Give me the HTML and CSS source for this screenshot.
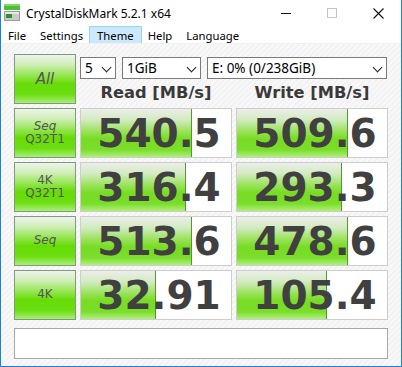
FILE: index.html
```html
<!DOCTYPE html>
<html lang="en">
<head>
  <meta charset="UTF-8">
  <title>CrystalDiskMark 5.2.1 x64</title>
  <link rel="stylesheet" href="styles.css">
</head>
<body>
  <div class="window">
    <div class="titlebar">
      <svg class="app-icon" width="16" height="17" viewBox="0 0 16 17">
        <rect x="0" y="0" width="16" height="6" fill="#4cbf3a"/>
        <rect x="0" y="0" width="16" height="2" fill="#7fdc62"/>
        <rect x="0.5" y="7.5" width="15" height="9" fill="#c9cbc9" stroke="#9a9c9a"/>
        <rect x="1" y="8" width="14" height="2" fill="#e6e7e6"/>
        <rect x="2" y="10" width="6" height="4" fill="#2f8f2a"/>
      </svg>
      <span class="title">CrystalDiskMark 5.2.1 x64</span>
      <div class="controls">
        <span class="ctl">
          <svg width="10" height="10" viewBox="0 0 10 10"><path d="M0 5.5H10" stroke="#111" stroke-width="1"/></svg>
        </span>
        <span class="ctl">
          <svg width="10" height="10" viewBox="0 0 10 10"><rect x="0.5" y="0.5" width="9" height="9" fill="none" stroke="#c4c4c4"/></svg>
        </span>
        <span class="ctl">
          <svg width="11" height="11" viewBox="0 0 11 11"><path d="M0.5 0.5L10.5 10.5M10.5 0.5L0.5 10.5" stroke="#111" stroke-width="1.1"/></svg>
        </span>
      </div>
    </div>

    <div class="menubar">
      <span class="menu-item">File</span>
      <span class="menu-item">Settings</span>
      <span class="menu-item active">Theme</span>
      <span class="menu-item">Help</span>
      <span class="menu-item">Language</span>
    </div>

    <div class="content">
      <div class="grid">
        <div class="label-btn all"><span class="slant">All</span></div>
        <div class="top-cell">
          <div class="selects">
            <div class="select count">5<span class="chev"></span></div>
            <div class="select size">1GiB<span class="chev"></span></div>
            <div class="select drive">E: 0% (0/238GiB)<span class="chev"></span></div>
          </div>
          <div class="headers">
            <div class="head">Read [MB/s]</div>
            <div class="head">Write [MB/s]</div>
          </div>
        </div>

        <div class="label-btn"><span class="slant">Seq</span><span>Q32T1</span></div>
        <div class="value"><div class="bar" style="width: 73%"></div><span class="num">540.5</span></div>
        <div class="value"><div class="bar" style="width: 73%"></div><span class="num">509.6</span></div>

        <div class="label-btn"><span>4K</span><span>Q32T1</span></div>
        <div class="value"><div class="bar" style="width: 69%"></div><span class="num">316.4</span></div>
        <div class="value"><div class="bar" style="width: 69%"></div><span class="num">293.3</span></div>

        <div class="label-btn"><span class="slant">Seq</span></div>
        <div class="value"><div class="bar" style="width: 73%"></div><span class="num">513.6</span></div>
        <div class="value"><div class="bar" style="width: 73%"></div><span class="num">478.6</span></div>

        <div class="label-btn"><span>4K</span></div>
        <div class="value"><div class="bar" style="width: 49%"></div><span class="num">32.91</span></div>
        <div class="value"><div class="bar" style="width: 59%"></div><span class="num">105.4</span></div>
      </div>

      <div class="comment"></div>
    </div>
  </div>
</body>
</html>
```

FILE: styles.css
```css
/* CrystalDiskMark window */
body {
  margin: 0;
  font-family: "Noto Sans", "DejaVu Sans", sans-serif;
  background: #ffffff;
}

.window {
  width: 402px;
  height: 367px;
  box-sizing: border-box;
  border: 1px solid #1883d7;
  border-top: none;
  display: flex;
  flex-direction: column;
  background: #ffffff;
}

.titlebar {
  height: 26px;
  display: flex;
  align-items: center;
  color: #000;
}

.app-icon {
  margin-left: 3px;
  margin-top: -1px;
}

.title {
  margin-left: 6px;
  font-size: 12px;
}

.controls {
  margin-left: auto;
  display: flex;
  height: 100%;
}

.ctl {
  width: 46px;
  display: flex;
  align-items: center;
  justify-content: center;
}

.menubar {
  height: 18px;
  display: flex;
  align-items: stretch;
  font-size: 11.3px;
}

.menu-item {
  padding: 0 7px;
  display: flex;
  align-items: center;
  border: 1px solid transparent;
  margin: 0 -1px;
}

.menu-item:first-child {
  margin-left: -1px;
}

.menu-item.active {
  background: #cce8ff;
  border-color: #99d1ff;
}

.content {
  flex: 1;
  padding: 10px 12px 0 13px;
  background: repeating-linear-gradient(135deg, #f8f8f8 0px, #f8f8f8 2px, #eeeeee 3px, #f8f8f8 4px);
  border-top: 1px solid #f0f0f0;
  margin-top: -1px;
}

.grid {
  display: grid;
  grid-template-columns: 62px 152px 152px;
  grid-auto-rows: 50px;
  gap: 4px;
}

.label-btn {
  box-sizing: border-box;
  border: 1px solid #7f9a7f;
  background: linear-gradient(to bottom, #eef3ec 0%, #d0eeb8 20%, #96e654 42%, #66dc06 60%, #6cde10 82%, #a8ee78 100%);
  display: flex;
  flex-direction: column;
  align-items: center;
  justify-content: center;
  font-family: "DejaVu Sans", sans-serif;
  font-size: 12px;
  line-height: 13.5px;
  color: #555;
}

.label-btn.all {
  font-size: 15px;
  padding-top: 2px;
}

.slant {
  font-style: italic;
}

.top-cell {
  grid-column: 2 / 4;
  display: flex;
  flex-direction: column;
}

.selects {
  display: flex;
  gap: 6px;
  margin-top: 3px;
}

.select {
  box-sizing: border-box;
  height: 22px;
  border: 1px solid #7a7a7a;
  background: #fff;
  font-size: 13.5px;
  padding-left: 4px;
  display: flex;
  align-items: center;
  position: relative;
  color: #000;
}

.select.count { width: 36px; }
.select.size { width: 79px; }
.select.drive { width: 180px; }

.chev {
  position: absolute;
  right: 5px;
  top: 6px;
  width: 6px;
  height: 6px;
  border-right: 1.5px solid #222;
  border-bottom: 1.5px solid #222;
  transform: rotate(45deg);
}

.headers {
  flex: 1;
  display: grid;
  grid-template-columns: 152px 152px;
  gap: 4px;
  padding-top: 2px;
}

.head {
  text-align: center;
  font-family: "DejaVu Sans", sans-serif;
  font-weight: bold;
  font-size: 16.3px;
  color: #3a3a3a;
  line-height: 24px;
}

.value {
  box-sizing: border-box;
  border: 1px solid #cdcdcd;
  background: #fff;
  position: relative;
  display: flex;
  align-items: center;
  justify-content: center;
  padding-left: 6px;
}

.bar {
  position: absolute;
  left: 0;
  top: 0;
  bottom: 0;
  border-right: 1px solid #4f9a2e;
  background: linear-gradient(to bottom, #eceeea 0%, #d3ebc2 22%, #96e254 48%, #78dc24 62%, #7ade2a 85%, #b0ef7e 100%);
}

.num {
  position: relative;
  font-family: "DejaVu Sans", sans-serif;
  font-weight: bold;
  font-size: 39px;
  color: #404040;
  line-height: 1;
}

.comment {
  box-sizing: border-box;
  margin-top: 8px;
  width: 374px;
  height: 31px;
  background: #fff;
  border: 1px solid #a8a8a8;
}
```
